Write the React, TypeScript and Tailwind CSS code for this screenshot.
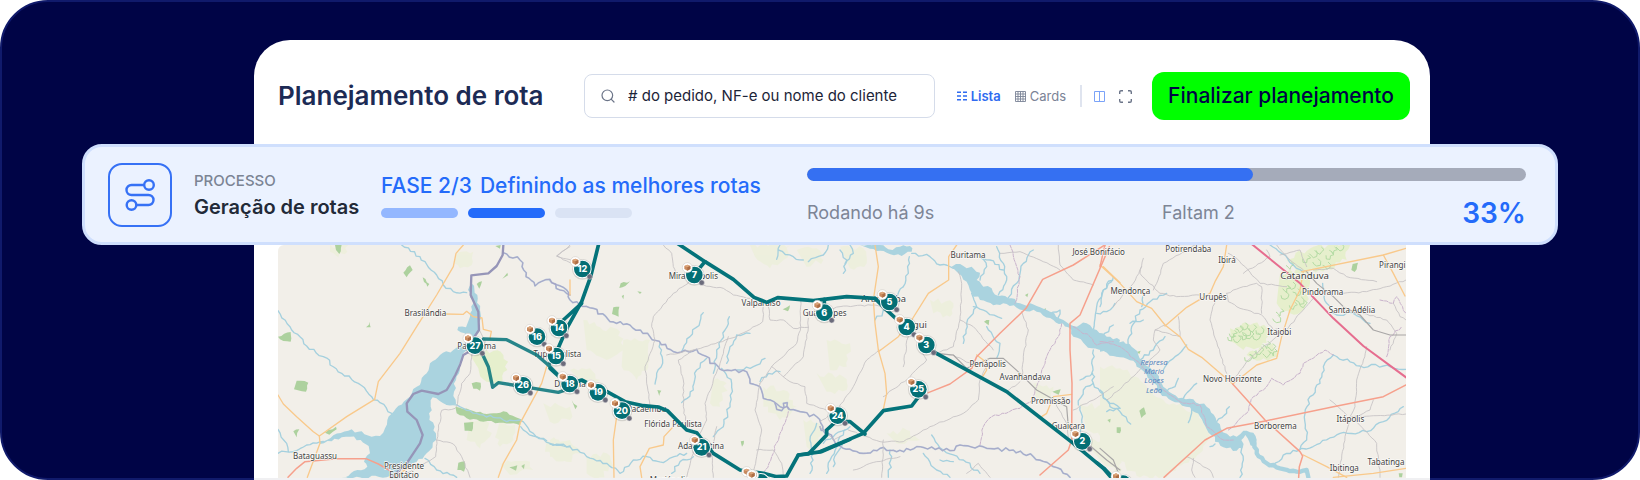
import React from "react";
import { Search } from "lucide-react";

type Pt = [number, number];

// Column offsets of the four map sheets, west to east.
const A = 0;
const B = 840;
const C = 1650;
const D = 2490;

const parse = (s: string, dx: number): Pt[] => {
  const n = s.trim().split(/[\s,]+/).map(Number);
  const out: Pt[] = [];
  for (let i = 0; i < n.length; i += 2) out.push([n[i] + dx, n[i + 1]]);
  return out;
};

const line = (s: string, dx: number) =>
  "M" + parse(s, dx).map((p) => p.join(" ")).join("L");

// Subdivides a course and bends it from side to side, as a stream meanders.
const meander = (s: string, dx: number, amp = 5) => {
  const pts = parse(s, dx);
  let seed = Math.round(pts[0][0] + pts[0][1] * 7);
  const rnd = () => {
    seed = (seed * 1103 + 12345) % 65521;
    return seed / 65521 - 0.5;
  };
  let d = `M${pts[0][0]} ${pts[0][1]}`;
  for (let i = 1; i < pts.length; i++) {
    const [x0, y0] = pts[i - 1];
    const [x1, y1] = pts[i];
    const len = Math.hypot(x1 - x0, y1 - y0) || 1;
    const steps = Math.max(1, Math.round(len / 11));
    for (let k = 1; k <= steps; k++) {
      const t = k / steps;
      const o = k === steps ? 0 : rnd() * 2 * amp;
      const x = x0 + (x1 - x0) * t - ((y1 - y0) / len) * o;
      const y = y0 + (y1 - y0) * t + ((x1 - x0) / len) * o;
      d += `L${x.toFixed(1)} ${y.toFixed(1)}`;
    }
  }
  return d;
};

type Course = [number, string];

const paleFields: Course[] = [
  [A, "560,40 610,35 605,75 570,85 553,70"],
  [A, "180,15 235,15 232,35 205,52 180,35"],
  [A, "600,540 650,530 660,590 630,625 590,600"],
  [A, "690,540 735,555 730,600 690,620 680,580"],
  [A, "830,600 900,610 900,665 850,655 825,635"],
  [A, "690,670 780,665 790,690 720,705"],
  [A, "820,490 900,500 900,540 840,545"],
  [B, "100,240 150,262 210,275 220,330 170,360 110,330"],
  [B, "220,300 300,300 300,360 260,420 215,380"],
  [B, "60,390 120,385 150,420 90,420"],
  [B, "0,600 60,600 90,640 50,665 0,650"],
  [B, "110,650 170,640 190,680 150,712 110,700"],
  [B, "600,15 720,15 700,60 660,85 615,50"],
  [B, "740,30 800,25 820,60 770,80"],
  [B, "640,440 700,450 740,500 690,540 640,500"],
  [B, "800,400 880,410 890,450 830,455"],
  [B, "760,540 820,560 800,640 770,620"],
  [B, "490,420 530,430 510,500 480,490"],
  [C, "20,300 90,310 80,380 30,390"],
  [C, "60,20 130,25 140,70 90,85"],
  [C, "640,430 700,440 690,480 650,480"],
  [C, "790,600 900,620 900,700 850,670"],
  [C, "780,490 860,505 900,545 900,600 800,570"],
  [C, "330,180 400,190 390,230 340,220"],
  [C, "200,580 260,570 300,600 230,610"],
  [D, "0,380 60,385 130,430 190,480 300,520 330,590 300,640 200,712 120,712 0,620"],
];

const greenFields: Course[] = [
  [A, "600,345 650,330 700,345 712,390 690,430 650,425 625,385"],
  [D, "540,100 600,90 630,130 610,210 570,220 530,190"],
  [D, "560,60 640,20 750,15 740,60 680,85 600,95"],
  [D, "390,265 460,250 520,270 500,310 430,330 395,305"],
  [D, "440,345 520,310 535,350 470,362"],
];

const woods: Course[] = [
  [A, "80,422 115,428 108,455 72,448"],
  [A, "24,290 62,276 62,305 30,298"],
  [A, "400,98 420,76 428,90 410,112"],
  [A, "556,500 600,510 650,522 700,514 757,540 750,556 700,548 640,545 590,535 560,520"],
  [A, "582,548 610,546 606,574 584,572"],
  [A, "605,430 632,428 630,452 610,446"],
  [A, "565,668 584,664 582,695 562,690"],
  [A, "195,15 215,15 208,42 198,30"],
  [A, "288,262 300,245 302,262"],
  [A, "458,112 478,132 472,140 462,126"],
  [A, "165,578 198,560 200,568 178,584"],
  [A, "70,574 88,568 80,592"],
  [A, "697,116 712,98 714,106"],
  [A, "620,132 636,124 628,146"],
  [A, "718,682 742,676 738,692"],
  [A, "754,678 764,672 762,688"],
  [A, "676,18 692,15 690,26"],
  [B, "190,202 208,200 206,230 186,222"],
  [B, "212,130 240,124 226,138 208,144"],
  [B, "65,480 82,498 76,508"],
  [B, "322,450 334,452 328,468"],
  [B, "572,604 582,602 576,620"],
  [B, "698,208 720,196 714,214"],
  [B, "262,154 275,156 270,162"],
  [B, "215,168 222,164 220,178"],
  [C, "492,245 508,240 506,256"],
  [C, "665,210 678,205 676,218"],
  [C, "697,455 722,448 716,464"],
  [C, "615,165 625,160 622,172"],
  [C, "862,540 872,536 870,548"],
  [D, "118,512 132,502 138,522 124,534"],
  [D, "50,562 62,562 60,580 50,578"],
  [D, "758,72 774,68 764,96 754,90"],
  [D, "368,586 388,588 386,600 374,596"],
  [D, "110,336 122,332 118,342"],
  [D, "896,700 908,700 906,712 898,712"],
];

const groves: Pt[] = [
  [400, 285], [418, 270], [432, 262], [440, 280], [412, 300], [450, 288], [470, 292], [428, 292], [458, 268],
  [480, 275], [395, 295], [500, 318], [515, 325], [480, 335], [460, 348], [446, 356], [500, 345], [520, 340],
  [560, 110], [575, 140], [590, 160], [600, 185], [580, 200], [555, 170], [610, 195], [560, 150], [570, 80],
  [620, 60], [640, 45], [660, 35], [690, 50], [700, 35], [720, 25], [650, 70], [680, 80], [530, 240], [540, 220],
];

const water: Course[] = [
  [
    A,
    "600,230 608,180 594,150 604,130 622,165 630,210 628,270 612,290 606,330 580,340 570,380 558,420 552,455 558,492 530,495 508,482 488,472 482,500 478,540 494,560 498,600 470,640 440,665 395,690 350,712 215,712 262,690 292,680 282,665 300,640 296,618 272,600 240,590 215,592 185,604 150,612 150,604 190,586 235,572 275,574 305,590 330,588 345,565 352,540 378,505 410,478 440,440 470,400 480,370 510,345 550,330 590,305 584,280 562,270 565,260 588,262",
  ],
  [
    C,
    "395,80 408,72 440,85 455,80 480,98 470,120 490,140 515,145 535,168 575,175 600,190 650,198 690,215 730,240 760,258 800,250 830,270 860,290 900,300 900,348 860,335 815,325 790,308 760,290 745,262 700,240 650,215 590,203 560,192 520,196 480,180 455,160 440,125 415,100",
  ],
  [
    C,
    "120,15 180,15 205,28 240,20 270,18 275,35 245,48 200,38 150,26",
  ],
  [
    D,
    "0,280 30,296 70,304 95,320 115,345 130,372 170,400 190,440 235,475 280,478 320,500 350,545 362,565 390,590 410,590 430,572 460,578 470,600 462,620 448,605 436,585 424,600 428,625 410,632 370,622 345,605 345,590 320,568 300,530 270,502 225,487 180,458 155,420 120,385 100,362 60,352 0,335",
  ],
];

const streams: Course[] = [
  [A, "24,212 60,260 110,318 160,350 215,400 265,430 305,470 330,488 365,520"],
  [A, "395,15 450,50 500,105 520,135 550,155 590,158"],
  [A, "24,640 80,632 110,615 160,604"],
  [A, "24,568 50,610 55,635"],
  [A, "530,492 580,505 640,525 700,540 750,540 790,580 840,610 900,618"],
  [A, "465,655 500,690 560,712"],
  [A, "752,560 790,588 830,602"],
  [B, "0,612 60,620 110,650 170,670 210,700 250,660 290,650 340,668 372,650 410,640"],
  [B, "365,700 390,665 430,650"],
  [B, "395,335 420,290 450,245 460,218"],
  [B, "490,400 500,330 525,270 538,230"],
  [B, "530,370 540,320 560,285 600,280"],
  [B, "315,432 320,400 338,370 330,310"],
  [B, "395,488 430,450 440,390 470,355"],
  [B, "515,385 545,430 540,490 520,560 490,590"],
  [B, "560,390 610,380 645,355"],
  [B, "630,425 655,400 690,395"],
  [B, "680,58 690,15"],
  [B, "685,30 730,50 760,60"],
  [B, "775,65 820,45 835,15"],
  [B, "780,700 790,640 780,600 800,550"],
  [B, "820,610 850,590 885,570"],
  [B, "850,680 860,640 880,600"],
  [C, "70,100 80,60 60,30"],
  [C, "20,700 35,650 60,590 90,560"],
  [C, "75,70 100,40 90,15"],
  [C, "250,140 265,100 268,50"],
  [C, "165,240 210,200 250,140"],
  [C, "275,40 330,50 360,75 400,85"],
  [C, "455,160 470,200 440,250 430,310"],
  [C, "460,200 500,215 545,235"],
  [C, "480,120 500,80 480,40"],
  [C, "535,165 560,120 550,70 530,20"],
  [C, "560,180 590,130 610,70 640,30"],
  [C, "460,40 510,60 550,90"],
  [C, "690,225 720,210 715,245"],
  [C, "820,270 830,200 850,150 880,110"],
  [C, "830,220 860,215 885,190"],
  [C, "820,330 818,380 820,430 860,480 900,505"],
  [C, "820,430 790,450 775,495"],
  [C, "780,420 818,400"],
  [C, "530,355 540,310 500,260"],
  [C, "205,712 215,650 210,630"],
  [C, "310,640 350,690 390,712"],
  [C, "335,585 370,630 430,660 480,700"],
  [C, "360,660 400,665"],
  [C, "780,600 785,540 780,500"],
  [D, "85,320 95,260 120,210 150,185 200,160"],
  [D, "90,250 130,240"],
  [D, "125,200 128,170"],
  [D, "120,360 160,330 195,290"],
  [D, "0,200 10,150 35,125"],
  [D, "190,390 225,350 260,315"],
  [D, "250,475 270,450 290,430"],
  [D, "200,455 225,440 235,415"],
  [D, "0,450 30,500 60,515 92,552"],
  [D, "20,515 60,505"],
  [D, "350,545 380,520 388,500"],
  [D, "330,620 345,612"],
  [D, "0,300 40,255"],
  [D, "285,490 265,548"],
  [D, "425,625 430,660 420,712"],
  [D, "510,15 545,40 580,75 610,95"],
  [D, "668,130 680,190 710,225 760,220 810,250"],
  [D, "700,345 670,380 660,430 630,470 615,520 620,600 600,628"],
  [D, "700,345 780,378 850,378 918,388"],
  [D, "595,630 660,610 720,580 800,575 850,545 910,500"],
  [D, "600,628 560,640 520,680"],
];

const rivers: Course[] = [[D, "462,600 470,640 500,670 540,685 590,695 620,690 625,712"]];

const minorRoads: Course[] = [
  [A, "900,20 860,48 900,68"],
  [A, "555,505 515,511 500,600 497,650 410,700"],
  [A, "500,600 550,612 575,650 600,712"],
  [A, "606,340 600,400 575,430 560,500"],
  [A, "628,270 645,300 648,330"],
  [B, "60,15 20,48 90,70 120,100"],
  [B, "340,15 365,40 370,80 382,105"],
  [B, "440,110 370,160 310,230 305,260 315,300 285,380 290,430 300,497"],
  [B, "640,190 638,245 560,290 430,330 350,345"],
  [B, "430,330 385,360 400,420 400,500 410,560"],
  [B, "535,290 510,370 465,490 470,540 440,600 410,712"],
  [B, "460,135 520,145 550,165 600,175"],
  [B, "655,190 660,240 700,240 730,265 775,262 775,235"],
  [B, "752,180 752,260 740,310 665,380 630,430"],
  [B, "775,262 760,350 700,410"],
  [B, "665,380 720,425 765,440 770,490 800,500 850,515"],
  [B, "630,430 615,510 635,570 620,650 610,700"],
  [B, "620,630 670,630 695,670 700,712"],
  [B, "500,560 485,640 490,712"],
  [C, "0,215 60,200 165,195 210,205"],
  [C, "415,95 425,130 420,240 400,320 350,340"],
  [C, "250,380 265,280"],
  [C, "300,320 320,360 270,410 190,470"],
  [C, "180,330 140,360 100,440 50,510 0,545"],
  [C, "85,570 180,605 250,605 330,560 430,520 475,480 480,420 500,380"],
  [C, "350,340 400,345 470,380"],
  [C, "600,425 560,455"],
  [C, "605,420 610,350 625,270 605,215"],
  [C, "190,600 185,712"],
  [C, "100,690 170,665 240,650"],
  [C, "440,700 475,670 510,712"],
  [C, "0,560 40,600 60,590"],
  [C, "420,240 460,260 520,330"],
  [C, "540,40 600,35 660,60 720,90"],
  [C, "715,15 720,75 760,120 820,135"],
  [C, "700,480 740,550 745,590"],
  [C, "760,510 820,480 880,440"],
  [D, "130,55 120,100 180,160 230,170 300,165"],
  [D, "285,15 190,70 170,130 160,150"],
  [D, "125,80 100,130 65,170 40,200"],
  [D, "235,230 240,290 165,270 195,255"],
  [D, "165,270 160,300 180,330 110,400 50,455 20,480"],
  [D, "345,180 330,240 360,340 380,400"],
  [D, "380,160 385,185 420,205 485,225 520,270 535,265"],
  [D, "485,220 485,140 470,130 430,140 380,160"],
  [D, "385,40 410,55 480,130 560,140"],
  [D, "430,100 510,50 500,30"],
  [D, "530,15 570,60 620,95"],
  [D, "540,45 600,30 620,80"],
  [D, "400,420 440,365 480,330 530,290"],
  [D, "560,270 600,220 640,175"],
  [D, "730,160 800,155 860,140 918,120"],
  [D, "640,90 700,85 740,110 830,125"],
  [D, "800,320 790,360 770,420 765,500 750,530 735,590 715,712"],
  [D, "755,530 918,522"],
  [D, "765,540 830,610 840,712"],
  [D, "770,530 810,510 820,480"],
  [D, "690,480 740,525"],
  [D, "790,220 860,240 890,280 870,330"],
  [D, "880,190 900,230 918,240"],
  [D, "260,650 330,690 340,712"],
  [D, "280,655 275,690 285,712"],
];

const railways: Course[] = [
  [C, "350,340 400,345 440,385 510,355 550,355 600,400 650,450 740,500 745,560 790,600 860,660 900,690"],
  [D, "0,625 40,660 60,712"],
  [D, "620,95 650,130 700,170 730,200 780,225 820,270 870,285 918,285"],
];

const orangeRoads: Course[] = [
  [A, "580,15 558,40 550,80 500,165 440,260 390,340 325,425 314,478"],
  [A, "314,478 230,530 148,588 130,575 80,530 40,492 24,465"],
  [A, "148,588 150,610 112,712"],
  [A, "525,222 580,223 590,214 610,230 636,234 640,268 664,274 660,296"],
  [A, "900,120 900,165"],
  [A, "830,380 815,430 750,550 740,600 700,670 685,712"],
  [A, "370,712 420,680"],
  [B, "200,530 190,600 192,712"],
  [B, "370,560 342,590 340,615 298,625 270,680 275,712"],
  [C, "165,15 175,80 160,180 165,250 175,330 195,400 200,460 190,508"],
  [C, "410,15 386,50 386,120 325,160 275,240 235,290 175,335"],
  [C, "470,345 490,360 500,390 488,410"],
  [C, "755,463 700,470 680,520 665,530"],
  [C, "850,80 900,128"],
  [D, "0,75 60,130 110,185 155,205 195,255 240,290 265,328 305,352 398,432"],
  [D, "380,15 370,80 345,125 330,160 260,202 195,258"],
  [D, "398,432 470,375 530,355 545,290 570,210 600,150 610,95"],
  [D, "605,95 850,45 918,25"],
  [D, "850,45 880,100 915,168"],
  [D, "610,645 680,680 740,712"],
  [D, "700,712 820,700 918,685"],
];

const redRoads: Course[] = [
  [A, "54,712 80,685 105,665 200,656 288,656 325,672 365,695"],
  [C, "870,5 760,75 668,118 618,205 540,280 470,350 455,385 390,432 325,458"],
  [C, "868,20 780,225 750,250 750,330 756,430 755,600 745,630 660,705"],
  [D, "15,15 0,80"],
  [D, "398,432 495,540 600,635 608,648 598,680 596,712"],
  [D, "918,435 850,470 700,500 500,542 380,565 315,600 192,712"],
];

const boundaries: Course[] = [
  [B, "640,712 665,650 690,580 715,515"],
  [C, "480,615 490,560 515,530 600,505 640,480 650,440 680,350 715,290 725,250"],
  [C, "570,15 590,80 600,110 585,190"],
  [D, "385,570 440,520 460,470 490,450 515,415 550,435 600,400 610,370 675,330 700,345"],
  [D, "840,180 880,190 890,170 918,220"],
  [D, "860,350 870,290 905,260"],
  [D, "0,305 60,320 100,355 150,400 190,450 240,485 300,495 320,560 370,600 400,600"],
  [C, "760,260 810,290 830,315 880,305"],
];

const stateLine: Course[] = [
  [A, "700,15 698,45 680,78 655,100 604,106 602,165 625,215 627,270 610,295 606,330 580,345 570,375 556,405 545,425 530,450 505,462 455,452 430,462 410,490 412,515 440,540 458,585 450,610 410,670 365,712"],
];

const borderRivers: Course[] = [
  [A, "700,38 750,60 768,110 795,138 840,118 870,150 900,165"],
  [B, "0,122 50,150 60,180 130,205 180,245 240,255 300,290 370,335 440,328 510,388 590,395 600,430 630,440 640,475 690,500 750,515 800,530 825,580"],
  [C, "0,560 60,618 130,640 180,625 230,635 290,620 390,632 420,615 500,625 580,630 640,650 700,680 750,712"],
  [B, "675,490 680,508 695,512 700,490 712,488 716,508"],
];

const motorway: Course[] = [[D, "455,12 600,130 700,235 790,318 918,412"]];

type Label = { text: string; x: number; y: number; size?: number };

const labels: Label[] = [
  { text: "Brasilândia", x: 466, y: 229 },
  { text: "Panorama", x: 620, y: 326 },
  { text: "Tupi Paulista", x: 862, y: 350 },
  { text: "Bataguassu", x: 135, y: 656 },
  { text: "Presidente", x: 402, y: 686 },
  { text: "Epitácio", x: 402, y: 715 },
  { text: "Dracena", x: 900, y: 440 },
  { text: "Mirandópolis", x: B + 430, y: 116 },
  { text: "Valparaíso", x: B + 633, y: 199 },
  { text: "Guararapes", x: B + 824, y: 228 },
  { text: "Pacaembu", x: B + 290, y: 516 },
  { text: "Flórida Paulista", x: B + 369, y: 560 },
  { text: "Adamantina", x: B + 453, y: 628 },
  { text: "Mariápolis", x: B + 358, y: 729 },
  { text: "Buritama", x: C + 444, y: 54 },
  { text: "José Bonifácio", x: C + 836, y: 46 },
  { text: "Araçatuba", x: C + 191, y: 187, size: 28 },
  { text: "Birigui", x: C + 278, y: 263, size: 28 },
  { text: "Penápolis", x: C + 503, y: 381 },
  { text: "Avanhandava", x: C + 615, y: 419 },
  { text: "Promissão", x: C + 692, y: 493 },
  { text: "Guaiçara", x: C + 745, y: 568 },
  { text: "Potirendaba", x: D + 265, y: 36 },
  { text: "Ibirá", x: D + 381, y: 69 },
  { text: "Catanduva", x: D + 614, y: 118, size: 29 },
  { text: "Pirangi", x: D + 877, y: 83 },
  { text: "Mendonça", x: D + 91, y: 163 },
  { text: "Urupês", x: D + 339, y: 181 },
  { text: "Pindorama", x: D + 668, y: 165 },
  { text: "Santa Adélia", x: D + 756, y: 218 },
  { text: "Itajobi", x: D + 538, y: 285 },
  { text: "Novo Horizonte", x: D + 397, y: 425 },
  { text: "Borborema", x: D + 526, y: 568 },
  { text: "Itápolis", x: D + 751, y: 545 },
  { text: "Ibitinga", x: D + 733, y: 693 },
  { text: "Tabatinga", x: D + 858, y: 675 },
];

const reservoir: Label[] = [
  { text: "Represa", x: D + 162, y: 374 },
  { text: "Mário", x: D + 162, y: 402 },
  { text: "Lopes", x: D + 162, y: 430 },
  { text: "Leão", x: D + 162, y: 458 },
];

const route: Course[] = [
  [B, "146,12 122,110 95,185 52,262 22,330"],
  [B, "95,190 40,240"],
  [B, "0,385 30,412 60,432"],
  [B, "60,432 95,420 144,445 175,457 225,485 280,497 325,501 352,512 380,540 410,570 440,578 457,600 490,640 570,690 640,700 680,710 710,708 745,645 815,635 900,598"],
  [C, "0,635 130,580 190,512 275,498 300,465"],
  [B, "863,540 830,570 830,585 775,642 745,645"],
  [C, "75,545 90,545 135,582"],
  [B, "385,12 465,65 550,118 612,172 650,187 683,173 790,182 890,170 975,175"],
  [C, "165,175 205,215 260,265 320,315 345,338 560,455 760,610 850,685 880,720 930,760"],
  [B, "465,65 440,95"],
  [B, "823,178 823,205"],
  [D, "-10,668 12,685 45,720 85,715"],
];

const lightRoute: Course[] = [
  [A, "640,297 710,299 800,345 835,375 875,415"],
  [A, "636,340 655,380 668,442 685,428 760,440 865,457 900,445"],
  [A, "835,375 857,348"],
];

const stops: { n: string; x: number; y: number }[] = [
  { n: "7", x: B + 433, y: 105 },
  { n: "12", x: B + 97, y: 87 },
  { n: "6", x: B + 823, y: 218 },
  { n: "5", x: C + 208, y: 186 },
  { n: "4", x: C + 260, y: 261 },
  { n: "3", x: C + 319, y: 315 },
  { n: "16", x: 801, y: 290 },
  { n: "14", x: 867, y: 264 },
  { n: "27", x: 615, y: 317 },
  { n: "15", x: 858, y: 348 },
  { n: "26", x: 759, y: 436 },
  { n: "18", x: 899, y: 432 },
  { n: "19", x: B + 144, y: 457 },
  { n: "20", x: B + 216, y: 512 },
  { n: "25", x: C + 295, y: 448 },
  { n: "24", x: B + 863, y: 527 },
  { n: "2", x: C + 787, y: 604 },
  { n: "21", x: B + 455, y: 622 },
  { n: "22", x: B + 632, y: 727 },
  { n: "1", x: D + 69, y: 731 },
];

function Lines({ data, wavy, amp, ...rest }: { data: Course[]; wavy?: boolean; amp?: number } & React.SVGProps<SVGGElement>) {
  return (
    <g fill="none" strokeLinejoin="round" strokeLinecap="round" {...rest}>
      {data.map(([dx, s], i) => (
        <path key={i} d={wavy ? meander(s, dx, amp) : line(s, dx)} />
      ))}
    </g>
  );
}

function Areas({ data, fill, amp }: { data: Course[]; fill: string; amp: number }) {
  return (
    <g fill={fill}>
      {data.map(([dx, s], i) => (
        <path key={i} d={meander(s, dx, amp) + "Z"} />
      ))}
    </g>
  );
}

function Parcel({ x, y }: { x: number; y: number }) {
  return (
    <g>
      <circle cx={x} cy={y} r="15" fill="#fff" stroke="#c9c5bf" strokeWidth="1.5" />
      <path d={`M${x - 9} ${y - 5}l9 -4l9 4v9l-9 5l-9 -5z`} fill="#c98a5e" />
      <path d={`M${x - 9} ${y - 5}l9 4l9 -4l-9 -4z`} fill="#dca67c" />
      <path d={`M${x} ${y - 1}v10l9 -5v-9z`} fill="#ad6d45" />
    </g>
  );
}

function Stop({ n, x, y }: { n: string; x: number; y: number }) {
  return (
    <g>
      <circle cx={x} cy={y + 1} r="31" fill="#000" opacity="0.12" />
      <circle cx={x} cy={y} r="28" fill="#fff" />
      <circle cx={x} cy={y} r="25" fill="#046f75" />
      <text x={x} y={y + 9} textAnchor="middle" fontSize="27" fontWeight="800" fill="#fff" fontFamily="Inter, sans-serif">
        {n}
      </text>
      <circle cx={x + 22} cy={y + 23} r="8" fill="#6b6b7b" stroke="#d8d6d8" strokeWidth="1.5" />
      <Parcel x={x - 21} y={y - 22} />
    </g>
  );
}

function RouteMap() {
  return (
    <svg
      viewBox="24 15 3384 699"
      className="block h-auto w-full rounded-tl-md"
      role="img"
      aria-label="Mapa das rotas"
    >
      <rect x="24" y="15" width="3384" height="699" fill="#f2efe9" />
      <g opacity="0.5">
        <Areas data={paleFields} fill="#eaf0d2" amp={9} />
      </g>
      <g opacity="0.85">
        <Areas data={greenFields} fill="#e4efc8" amp={9} />
      </g>
      <Areas data={woods} fill="#add19e" amp={3} />
      <g fill="none" stroke="#b4dba4" strokeWidth="3">
        {groves.map(([x, y], i) => (
          <path key={i} d={meander(`${x - 12},${y - 4} ${x},${y + 8} ${x + 12},${y - 6} ${x + 4},${y - 14}`, D, 8)} />
        ))}
      </g>
      <Lines data={streams} wavy amp={5} stroke="#a5d0de" strokeWidth="4" />
      <Lines data={rivers} wavy amp={3} stroke="#aad3df" strokeWidth="13" />
      <Areas data={water} fill="#aad3df" amp={5} />
      <Lines data={borderRivers} wavy amp={6} stroke="#aebfd6" strokeWidth="5" />
      <Lines data={borderRivers} wavy amp={6} stroke="#a59cc0" strokeWidth="2" />
      <Lines data={boundaries} wavy amp={3} stroke="#c9b3cc" strokeWidth="3" strokeDasharray="10 4" />
      <Lines data={minorRoads} wavy amp={2} stroke="#c4c1c3" strokeWidth="2.5" />
      <Lines data={railways} stroke="#a8a6a6" strokeWidth="3.5" />
      <Lines data={orangeRoads} stroke="#f9c98b" strokeWidth="4" />
      <Lines data={redRoads} stroke="#f6a08c" strokeWidth="4.5" />
      <Lines data={motorway} stroke="#e66d8f" strokeWidth="6" />
      <Lines data={stateLine} stroke="#9695b8" strokeWidth="7" />

      <g
        textAnchor="middle"
        fill="#3f3f3f"
        stroke="#fbfaf7"
        strokeWidth="4"
        strokeLinejoin="round"
        paintOrder="stroke"
        fontFamily="'Noto Sans', sans-serif"
      >
        {labels.map((l) => (
          <text key={l.text} x={l.x} y={l.y} fontSize={l.size ?? 24}>
            {l.text}
          </text>
        ))}
      </g>
      <g textAnchor="middle" fill="#5585c0" fontStyle="italic" fontFamily="'Noto Sans', sans-serif" fontSize="23">
        {reservoir.map((l) => (
          <text key={l.text} x={l.x} y={l.y}>
            {l.text}
          </text>
        ))}
      </g>

      <Lines data={lightRoute} stroke="#04737a" strokeWidth="10" opacity="0.85" />
      <Lines data={route} stroke="#04737a" strokeWidth="11" />
      {stops.map((s) => (
        <Stop key={s.n} {...s} />
      ))}
      <Parcel x={B + 590} y={695} />
      <Parcel x={B + 605} y={704} />
    </svg>
  );
}

function ListGlyph() {
  return (
    <svg viewBox="0 0 10 10" className="size-2.5" fill="none" stroke="currentColor" strokeWidth="1.4" aria-hidden="true">
      <path d="M0 1.2h4M6 1.2h4M0 5h4M6 5h4M0 8.8h4M6 8.8h4" />
    </svg>
  );
}

function GridGlyph() {
  return (
    <svg viewBox="0 0 11 11" className="size-[11px]" fill="none" stroke="currentColor" strokeWidth="0.9" aria-hidden="true">
      <path d="M.5 .5h10v10h-10zM3 .5v10M5.5 .5v10M8 .5v10M.5 3h10M.5 5.5h10M.5 8h10" />
    </svg>
  );
}

function ColumnsGlyph() {
  return (
    <svg viewBox="0 0 11 11" className="size-[11px]" fill="none" stroke="currentColor" aria-hidden="true">
      <path d="M.5 .5h10v10h-10zM5.5 .5v10" />
    </svg>
  );
}

function ExpandGlyph() {
  return (
    <svg viewBox="0 0 13 13" className="size-[13px]" fill="none" stroke="currentColor" strokeWidth="1.4" aria-hidden="true">
      <path d="M.7 4V2a1.3 1.3 0 0 1 1.3-1.3h2M9 .7h2A1.3 1.3 0 0 1 12.3 2v2M12.3 9v2a1.3 1.3 0 0 1-1.3 1.3H9M4 12.3H2A1.3 1.3 0 0 1 .7 11V9" />
    </svg>
  );
}

function RouteGlyph() {
  return (
    <svg viewBox="0 0 30 32" className="h-8 w-[30px]" fill="none" stroke="currentColor" strokeWidth="2.4" aria-hidden="true">
      <circle cx="24" cy="6" r="4.8" />
      <circle cx="6.5" cy="26" r="4.8" />
      <path d="M19 6H6.500a5 5 0 0 0 0 10H23.500a5 5 0 0 1 0 10H11.500" />
    </svg>
  );
}

export default function App() {
  return (
    <main className="rounded-[48px] border-2 border-[#101a6b] bg-[#000446] pt-[38px] font-['Inter',sans-serif]">
      <div className="mr-[208px] -mb-0.5 ml-[252px] rounded-t-[36px] border-b-2 border-[#f0f0f2] bg-white">
        <header className="flex items-center pt-8 pr-5 pb-6 pl-6">
          <h1 className="w-[306px] shrink-0 text-[26px] leading-8 font-semibold whitespace-nowrap text-[#1d2b55]">
            Planejamento de rota
          </h1>
          <label className="flex h-11 min-w-0 flex-1 items-center gap-3 rounded-lg border border-[#d5dcea] pr-2 pl-[15px]">
            <Search className="size-4 shrink-0 text-[#6b7488]" strokeWidth={1.8} />
            <span className="sr-only">Buscar pedido</span>
            <input
              type="text"
              placeholder="# do pedido, NF-e ou nome do cliente"
              className="w-full min-w-0 bg-transparent text-[15px] leading-6 text-[#1c2438] outline-none placeholder:text-[#1c2438] placeholder:opacity-100"
            />
          </label>
          <div className="flex shrink-0 items-center pl-[22px] text-[13px] leading-5">
            <button type="button" className="flex items-center gap-1 font-semibold text-[#2f6bf0]">
              <ListGlyph />
              Lista
            </button>
            <button type="button" className="ml-3.5 flex items-center gap-1 text-[#7b8396]">
              <GridGlyph />
              Cards
            </button>
            <span className="mr-3 ml-3.5 h-[22px] w-0.5 bg-[#dfe4ef]" />
            <button type="button" aria-label="Colunas" className="text-[#7ba3f8]">
              <ColumnsGlyph />
            </button>
            <button type="button" aria-label="Tela cheia" className="ml-3.5 text-[#6b7488]">
              <ExpandGlyph />
            </button>
          </div>
          <button
            type="button"
            className="ml-5 h-12 w-[258px] shrink-0 rounded-xl bg-[#00ff00] text-[21px] leading-7 font-medium whitespace-nowrap text-[#000446]"
          >
            Finalizar planejamento
          </button>
        </header>

        <section className="-mr-32 -ml-[172px] flex items-center rounded-[20px] border-3 border-[#cfdffd] bg-[#ebf2ff] py-[15px] pr-[29px] pl-[23px]">
          <div className="flex size-16 shrink-0 items-center justify-center rounded-[14px] border-2 border-[#3671f5] text-[#3671f5]">
            <RouteGlyph />
          </div>
          <div className="ml-[22px] w-[187px] shrink-0 whitespace-nowrap">
            <p className="text-[15px] leading-6 font-medium text-[#7b8494]">PROCESSO</p>
            <p className="text-xl leading-7 font-semibold text-[#222a38]">Geração de rotas</p>
          </div>
          <div className="w-[426px] shrink-0 whitespace-nowrap">
            <p className="flex gap-2 text-[21px] leading-7 font-medium text-[#246bfa]">
              <span>FASE 2/3</span>
              <span>Definindo as melhores rotas</span>
            </p>
            <div className="mt-2 flex gap-2.5">
              <span className="h-2.5 w-[77px] rounded-full bg-[#93b7ff]" />
              <span className="h-2.5 w-[77px] rounded-full bg-[#246bfa]" />
              <span className="h-2.5 w-[77px] rounded-full bg-[#dae3f4]" />
            </div>
          </div>
          <div className="min-w-0 flex-1 pt-1.5">
            <div className="h-[13px] overflow-hidden rounded-full bg-[#a5abba]">
              <div className="h-full w-[62%] rounded-full bg-[#3570f2]" />
            </div>
            <div className="mt-[18px] flex items-center text-lg leading-7 text-[#7d8596]">
              <span className="w-[355px]">Rodando há 9s</span>
              <span>Faltam 2</span>
              <span className="ml-auto text-[28px] font-semibold text-[#246bfa]">33%</span>
            </div>
          </div>
        </section>

        <div className="px-6">
          <RouteMap />
        </div>
      </div>
    </main>
  );
}
